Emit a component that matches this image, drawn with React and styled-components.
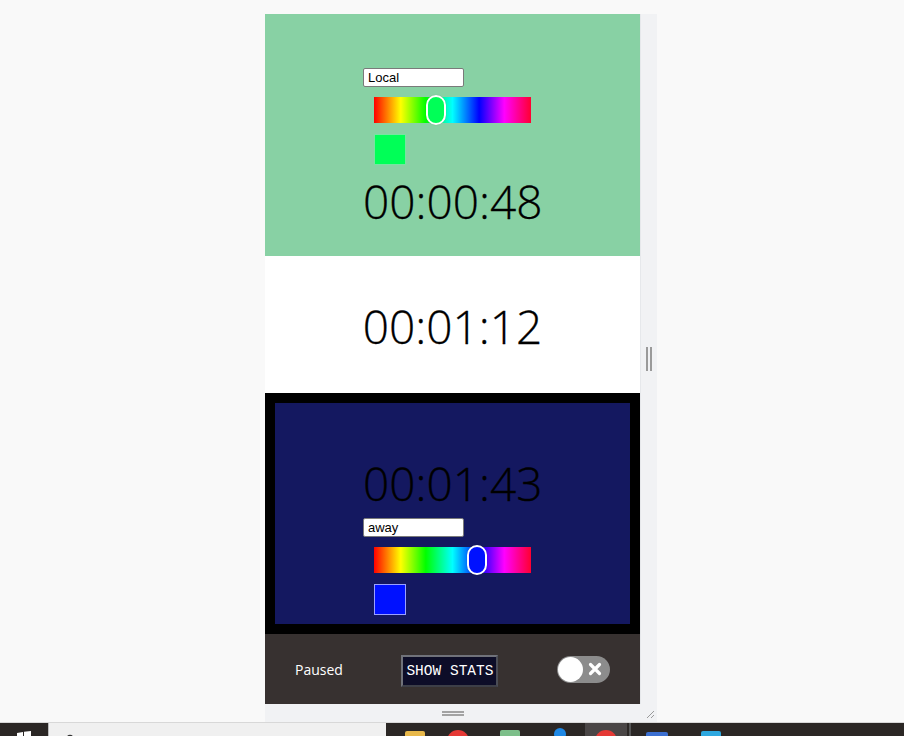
import React from 'react';
import styled, { createGlobalStyle } from 'styled-components';

const GlobalStyle = createGlobalStyle`
  html, body {
    margin: 0;
    padding: 0;
    background: #f9f9f9;
    font-family: "Open Sans", "Liberation Sans", sans-serif;
  }
`;

const Screen = styled.div`
  width: 904px;
  height: 736px;
  display: flex;
  flex-direction: column;
  overflow: hidden;
`;

const Desktop = styled.div`
  flex: 1;
  padding: 14px 0 0 265px;
`;

const Window = styled.div`
  width: 392px;
  display: grid;
  grid-template-columns: 375px 17px;
  grid-template-rows: 690px 18px;
  background: #f1f2f4;
`;

const Content = styled.div`
  display: flex;
  flex-direction: column;
`;

const Gutter = styled.div`
  display: flex;
  align-items: center;
  justify-content: center;
  border-left: 1px solid #e6e8eb;
`;

const VHandle = styled.div`
  width: 6px;
  height: 24px;
  border-left: 2px solid #9a9a9a;
  border-right: 2px solid #9a9a9a;
  box-sizing: border-box;
`;

const BottomStrip = styled.div`
  grid-column: 1 / span 2;
  display: flex;
  align-items: center;
  justify-content: center;
  position: relative;
`;

const HHandle = styled.div`
  width: 22px;
  height: 5px;
  border-top: 2px solid #a3a3a3;
  border-bottom: 2px solid #a3a3a3;
  box-sizing: border-box;
  margin-left: -16px;
`;

const Grip = styled.svg`
  position: absolute;
  right: 2px;
  bottom: 3px;
`;

const GreenSection = styled.div`
  height: 242px;
  background: #88d1a4;
  display: flex;
  justify-content: center;
  padding-top: 54px;
  box-sizing: border-box;
`;

const WhiteSection = styled.div`
  height: 137px;
  background: #ffffff;
  display: flex;
  align-items: center;
  justify-content: center;
  padding-top: 2px;
  box-sizing: border-box;
`;

const AwaySection = styled.div`
  height: 241px;
  background: #141860;
  border: 10px solid #000;
  box-sizing: border-box;
  display: flex;
  justify-content: center;
  padding-top: 49px;
`;

const Column = styled.div`
  width: 179px;
  display: flex;
  flex-direction: column;
  align-items: flex-start;
`;

const NameInput = styled.input`
  width: 101px;
  height: 19px;
  box-sizing: border-box;
  border: 1px solid #7a7a7a;
  border-radius: 2px;
  background: #fff;
  padding: 0 4px;
  font-family: "Liberation Sans", Arial, sans-serif;
  font-size: 13px;
  color: #000;
  outline: none;
  margin-top: ${(p) => p.$top || 0}px;
`;

const HueTrack = styled.div`
  position: relative;
  width: 157px;
  height: 26px;
  margin: 10px 0 0 11px;
  background: linear-gradient(to right, #ff0000 0%, #ffff00 17%, #00ff00 33%, #00ffff 50%, #0000ff 67%, #ff00ff 83%, #ff0030 100%);
`;

const Thumb = styled.div`
  position: absolute;
  top: -2px;
  width: 20px;
  height: 30px;
  margin-left: -10px;
  box-sizing: border-box;
  border: 2px solid #fff;
  border-radius: 10px;
  background: ${(p) => p.$color};
  box-shadow: 0 0 1px rgba(0, 0, 0, 0.3);
`;

const Swatch = styled.div`
  width: 32px;
  height: 31px;
  box-sizing: border-box;
  margin: 11px 0 0 11px;
  background: ${(p) => p.$color};
  border: 1px solid ${(p) => p.$edge};
`;

const Clock = styled.div`
  font-family: "Open Sans", "Liberation Sans", sans-serif;
  font-weight: 300;
  font-size: 46px;
  line-height: normal;
  color: #000;
  margin-top: ${(p) => p.$top || 0}px;
  white-space: nowrap;
  -webkit-text-stroke: 0.3px #000;
`;

const Footer = styled.div`
  height: 70px;
  background: #373130;
  display: flex;
  align-items: center;
  justify-content: space-between;
  padding: 0 30px;
  box-sizing: border-box;
`;

const Status = styled.span`
  color: #fff;
  font-size: 14px;
  font-family: "Open Sans", "Liberation Sans", sans-serif;
`;

const StatsButton = styled.button`
  width: 97px;
  height: 32px;
  background: #0d0d28;
  color: #fff;
  font-family: "Courier New", "Liberation Mono", monospace;
  font-size: 14.5px;
  border: 2px solid #70727a;
  border-bottom-color: #3d3f48;
  border-right-color: #4a4c55;
  padding: 0;
  margin-top: 4px;
`;

const Toggle = styled.div`
  position: relative;
  width: 53px;
  height: 27px;
  border-radius: 14px;
  background: #8c8c8c;
  display: flex;
  align-items: center;
  justify-content: flex-end;
  padding-right: 8px;
  box-sizing: border-box;
`;

const Knob = styled.div`
  position: absolute;
  left: 1px;
  top: 1px;
  width: 25px;
  height: 25px;
  border-radius: 50%;
  background: #fff;
`;

const Taskbar = styled.div`
  height: 14px;
  background: #2b2725;
  border-top: 1px solid #d8d8d8;
  display: flex;
  align-items: flex-start;
  position: relative;
  overflow: hidden;
`;

const StartArea = styled.div`
  width: 48px;
  height: 100%;
  display: flex;
  justify-content: center;
  padding-top: 8px;
  box-sizing: border-box;
`;

const SearchBox = styled.div`
  width: 338px;
  height: 100%;
  background: #f0f0f0;
  border-left: 1px solid #bbb;
  padding: 6px 0 0 14px;
  box-sizing: border-box;
`;

const IconRow = styled.div`
  display: flex;
  align-items: flex-start;
  height: 100%;
  padding-left: 14px;
`;

const TaskSlot = styled.div`
  width: ${(p) => p.$w || 52}px;
  height: 100%;
  display: flex;
  justify-content: center;
  padding-top: ${(p) => p.$pt || 7}px;
  box-sizing: border-box;
  background: ${(p) => (p.$active ? '#4a4646' : 'transparent')};
  border-right: ${(p) => (p.$sep ? '2px solid #555' : 'none')};
`;

const Dot = styled.div`
  width: ${(p) => p.$size}px;
  height: ${(p) => p.$size}px;
  border-radius: ${(p) => (p.$round ? '50%' : '2px')};
  background: ${(p) => p.$color};
`;

const Player = ({ name, hue, color, edge, reverse, time }) => {
  const input = <NameInput key="in" defaultValue={name} $top={reverse ? 4 : 0} />;
  const picker = [
    <HueTrack key="tr">
      <Thumb $color={color} style={{ left: `${(hue / 360) * 157}px` }} />
    </HueTrack>,
    <Swatch key="sw" $color={color} $edge={edge} />,
  ];
  const clock = <Clock key="ck" $top={reverse ? 0 : 5}>{time}</Clock>;
  return (
    <Column>
      {reverse ? [clock, input, ...picker] : [input, ...picker, clock]}
    </Column>
  );
};

export default function App() {
  return (
    <Screen>
      <GlobalStyle />
      <Desktop>
        <Window>
          <Content>
            <GreenSection>
              <Player name="Local" hue={143} color="#00ff57" edge="#74e6a0" time="00:00:48" />
            </GreenSection>
            <WhiteSection>
              <Clock>00:01:12</Clock>
            </WhiteSection>
            <AwaySection>
              <Player name="away" hue={236} color="#0011ff" edge="#9aa0ff" time="00:01:43" reverse />
            </AwaySection>
            <Footer>
              <Status>Paused</Status>
              <StatsButton>SHOW STATS</StatsButton>
              <Toggle>
                <Knob />
                <svg width="14" height="14" viewBox="0 0 14 14">
                  <path d="M2.5 2.5 L11.5 11.5 M11.5 2.5 L2.5 11.5" stroke="#fff" strokeWidth="3.2" strokeLinecap="round" />
                </svg>
              </Toggle>
            </Footer>
          </Content>
          <Gutter>
            <VHandle />
          </Gutter>
          <BottomStrip>
            <HHandle />
            <Grip width="10" height="10" viewBox="0 0 10 10">
              <path d="M9 2 L2 9 M9 6 L6 9" stroke="#9a9a9a" strokeWidth="1" />
            </Grip>
          </BottomStrip>
        </Window>
      </Desktop>
      <Taskbar>
        <StartArea>
          <svg width="14" height="14" viewBox="0 0 14 14">
            <path d="M0 2 L6 1 L6 6.5 L0 6.5 Z M7 0.8 L14 0 L14 6.5 L7 6.5 Z" fill="#fff" />
          </svg>
        </StartArea>
        <SearchBox>
          <svg width="12" height="12" viewBox="0 0 12 12">
            <circle cx="7" cy="5" r="3.5" stroke="#333" strokeWidth="1.3" fill="none" />
          </svg>
        </SearchBox>
        <IconRow>
          <TaskSlot $w={30} $pt={8}><Dot $size={20} $color="#e8b84a" /></TaskSlot>
          <TaskSlot $w={55}><Dot $size={22} $color="#e53935" $round /></TaskSlot>
          <TaskSlot $w={50}><Dot $size={20} $color="#7dbf8a" /></TaskSlot>
          <TaskSlot $w={50} $pt={5}><Dot $size={12} $color="#1e88e5" $round /></TaskSlot>
          <TaskSlot $w={42} $active><Dot $size={22} $color="#e53935" $round /></TaskSlot>
          <TaskSlot $w={4} $sep />
          <TaskSlot $w={52} $pt={9}><Dot $size={22} $color="#3b6fd1" /></TaskSlot>
          <TaskSlot $w={56} $pt={8}><Dot $size={20} $color="#2ea8e0" /></TaskSlot>
        </IconRow>
      </Taskbar>
    </Screen>
  );
}
